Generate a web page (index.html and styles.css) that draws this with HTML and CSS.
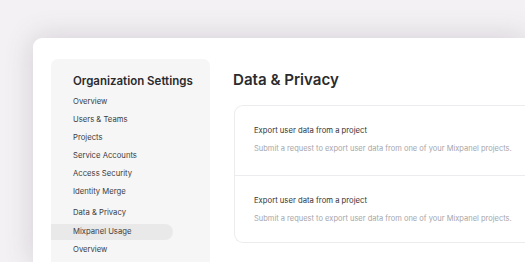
FILE: index.html
```html
<!DOCTYPE html>
<html lang="en">
<head>
    <meta charset="UTF-8">
    <title>Organization Settings - Data &amp; Privacy</title>
    <link rel="stylesheet" href="styles.css">
</head>
<body>
    <div class="window">
        <div class="sidebar">
            <h2>Organization Settings</h2>
            <ul class="menu">
                <li>Overview</li>
                <li>Users &amp; Teams</li>
                <li>Projects</li>
                <li>Service Accounts</li>
                <li>Access Security</li>
                <li>Identity Merge</li>
                <li class="group-start">Data &amp; Privacy</li>
                <li class="active">Mixpanel Usage</li>
                <li>Overview</li>
            </ul>
        </div>
        <div class="main">
            <h1>Data &amp; Privacy</h1>
            <div class="card">
                <div class="row">
                    <div class="row-title">Export user data from a project</div>
                    <div class="row-desc">Submit a request to export user data from one of your Mixpanel projects.</div>
                </div>
                <div class="row">
                    <div class="row-title">Export user data from a project</div>
                    <div class="row-desc">Submit a request to export user data from one of your Mixpanel projects.</div>
                </div>
            </div>
        </div>
    </div>
</body>
</html>
```

FILE: styles.css
```css
html, body {
    margin: 0;
    width: 100%;
    height: 100%;
    overflow: hidden;
}
body {
    font-family: Inter, "Noto Sans", sans-serif;
    background: #f3f1f3;
    padding: 38px 0 0 33px;
    box-sizing: border-box;
}
.window {
    display: flex;
    background: #fff;
    border-radius: 9px 0 0 0;
    height: 100%;
    width: 100%;
    padding: 21px 0 0 18px;
    box-sizing: border-box;
    box-shadow: 0 0 28px rgba(110, 90, 120, 0.24);
}
.sidebar {
    width: 159px;
    flex-shrink: 0;
    background: #f6f6f6;
    border-radius: 7px 7px 0 0;
    padding-top: 13px;
}
.sidebar h2 {
    margin: 0 0 3px 22px;
    font-size: 11.5px;
    font-weight: 600;
    color: #2b2b2e;
    line-height: 18px;
}
.menu {
    list-style: none;
    margin: 0;
    padding: 0;
}
.menu li {
    font-size: 7.7px;
    color: #3c3c40;
    line-height: 18px;
    padding-left: 22px;
}
.menu li.group-start {
    margin-top: 3px;
}
.menu li.active {
    background: #e9e9ea;
    border-radius: 0 9px 9px 0;
    width: 100px;
    line-height: 16px;
    margin: 2px 0 1px;
}
.main {
    flex: 1;
    padding-left: 23px;
}
.main h1 {
    margin: 10px 0 0;
    font-size: 15.1px;
    font-weight: 600;
    color: #2b2b2e;
    line-height: 22px;
}
.card {
    margin: 14px 0 0 1px;
    border: 1px solid #ececee;
    border-right: none;
    border-radius: 9px 0 0 9px;
}
.row {
    padding: 19px 0 0 19px;
    height: 69px;
    box-sizing: border-box;
}
.row + .row {
    border-top: 1px solid #ececee;
    height: 67px;
}
.row-title {
    font-size: 7.7px;
    color: #35353a;
    line-height: 12px;
}
.row-desc {
    margin-top: 6px;
    font-size: 7.5px;
    color: #a6a6aa;
    line-height: 12px;
}
```
